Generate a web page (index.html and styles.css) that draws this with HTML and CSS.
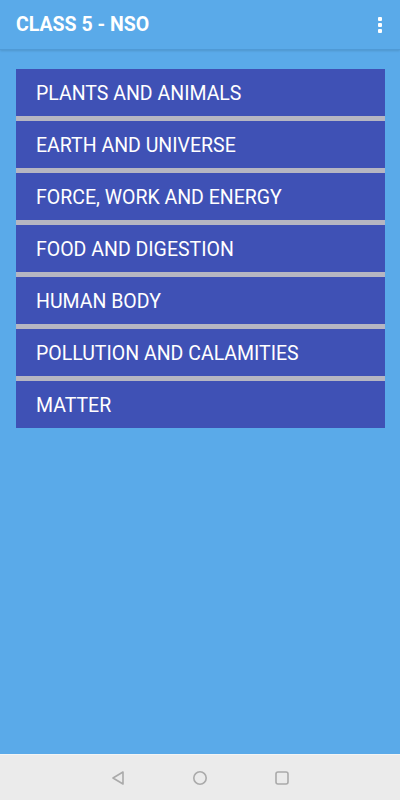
FILE: index.html
```html
<!DOCTYPE html>
<html>
<head>
<meta charset="utf-8">
<link rel="stylesheet" href="styles.css">
</head>
<body>
<div class="screen">
  <header class="appbar">
    <span class="title">CLASS 5 - NSO</span>
    <span class="menu"><i></i><i></i><i></i></span>
  </header>
  <main class="content">
    <ul class="list">
      <li>PLANTS AND ANIMALS</li>
      <li>EARTH AND UNIVERSE</li>
      <li>FORCE, WORK AND ENERGY</li>
      <li>FOOD AND DIGESTION</li>
      <li>HUMAN BODY</li>
      <li>POLLUTION AND CALAMITIES</li>
      <li>MATTER</li>
    </ul>
  </main>
  <nav class="navbar">
    <svg width="16" height="16" viewBox="0 0 16 16"><path d="M13 2 L3 8 L13 14 Z" fill="none" stroke="#aaaaaa" stroke-width="1.6" stroke-linejoin="round"/></svg>
    <svg width="16" height="16" viewBox="0 0 16 16"><circle cx="8" cy="8" r="6.2" fill="none" stroke="#aaaaaa" stroke-width="1.6"/></svg>
    <svg width="16" height="16" viewBox="0 0 16 16"><rect x="2" y="2" width="12" height="12" rx="2" fill="none" stroke="#aaaaaa" stroke-width="1.6"/></svg>
  </nav>
</div>
</body>
</html>
```
FILE: styles.css
```css
* { box-sizing: border-box; }
html, body { margin: 0; padding: 0; }
body { font-family: Roboto, "Liberation Sans", sans-serif; background: #5aaae9; }
.screen { width: 400px; height: 800px; display: flex; flex-direction: column; background: #5aaae9; }
.appbar {
  height: 50px; flex: none;
  display: flex; align-items: center; justify-content: space-between;
  padding: 0 18px 0 16px;
  background: #5aaae9;
  border-bottom: 1px solid #4f9ad6;
  box-shadow: 0 1px 2px rgba(0,0,0,0.12);
}
.title { color: #fff; font-weight: 700; font-size: 19.5px; letter-spacing: 0; }
.menu { display: flex; flex-direction: column; gap: 2px; }
.menu i { width: 4px; height: 4px; background: #fff; border-radius: 1px; display: block; }
.content { flex: 1; padding: 19px 15px 0 16px; }
.list { list-style: none; margin: 0; padding: 0; display: flex; flex-direction: column; gap: 5px; background: #b6b6c2; }
.list li {
  height: 47px; background: #3f51b5; color: #fff;
  font-size: 19.5px; display: flex; align-items: center; padding: 1px 0 0 20px;
  letter-spacing: 0;
}
.navbar {
  height: 46px; flex: none; background: #ebebeb;
  border-top: 1px solid #f4f4f4;
  display: flex; align-items: center; justify-content: center; gap: 66px;
}
```
